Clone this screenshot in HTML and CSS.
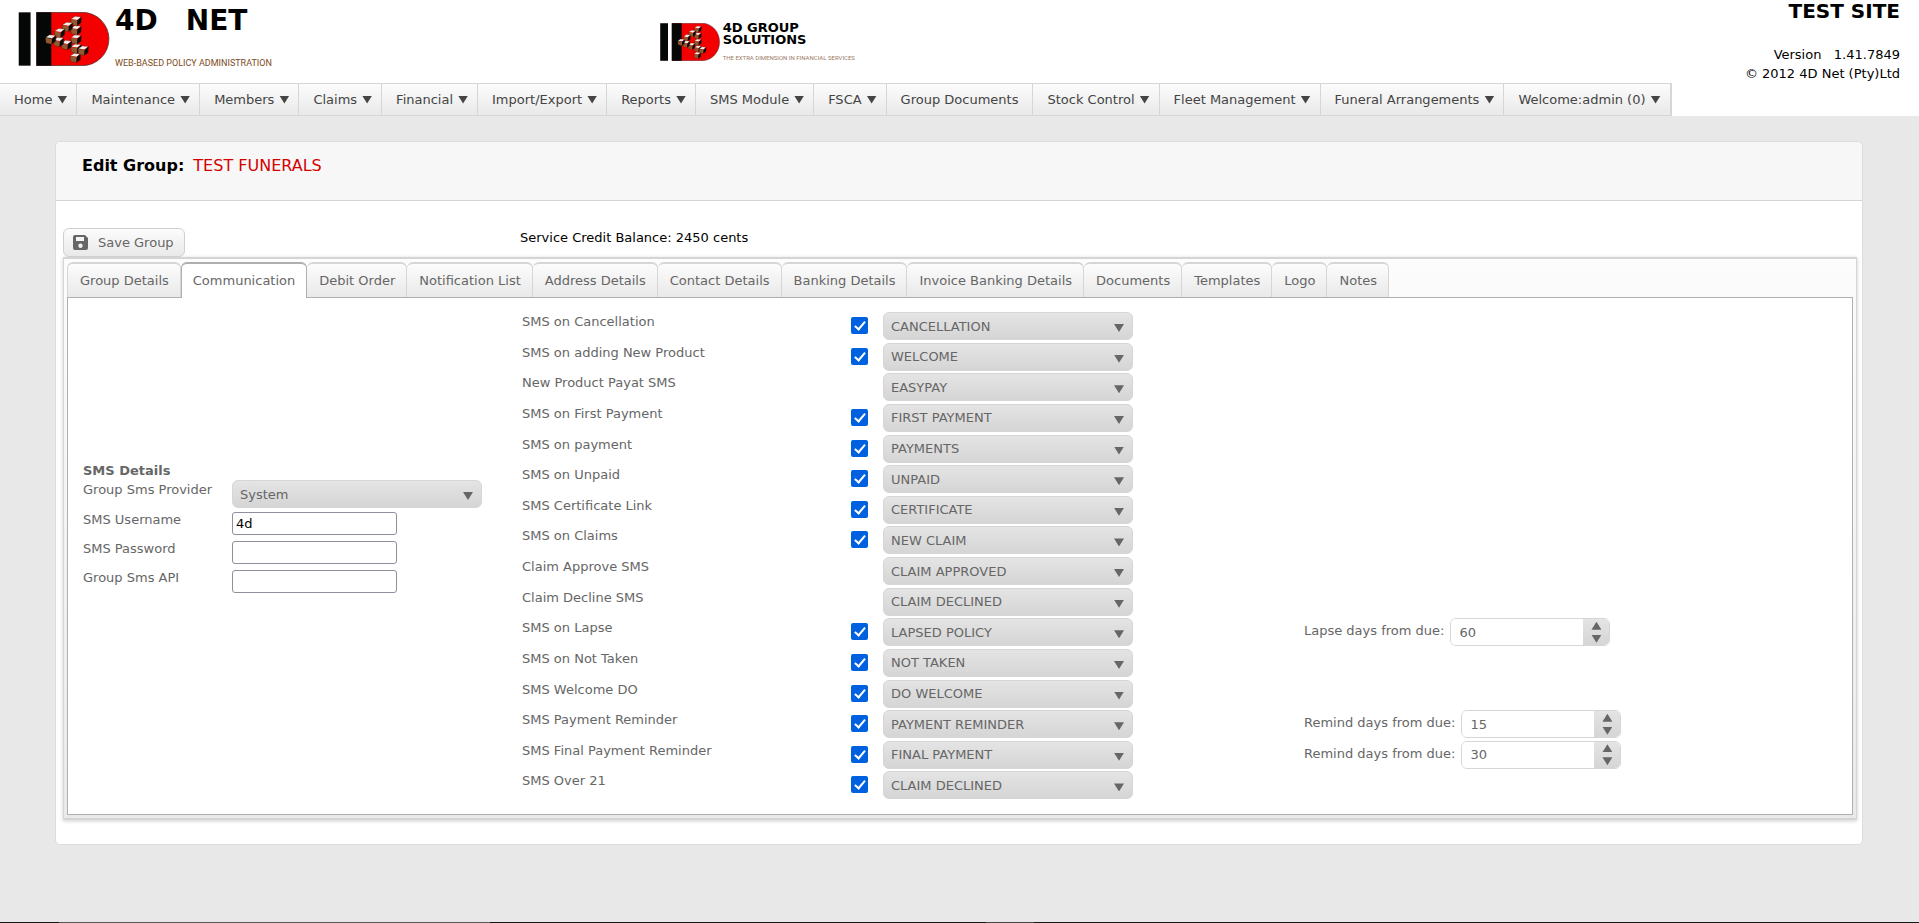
FILE: index.html
```html
<!DOCTYPE html>
<html lang="en">
<head>
<meta charset="utf-8">
<title>4D Net - Edit Group</title>
<link rel="stylesheet" href="styles.css">
</head>
<body>
<svg class="defs" aria-hidden="true">
  <defs>
    <g id="cube">
      <path d="M-15 -7 L-3 -15 L15 -13 L4 -4 Z" fill="#f1ede6"/>
      <path d="M-16 -6 L4 -3 L3 14 L-14 10 Z" fill="#8f5a30"/>
      <path d="M4 -3 L16 -13 L15 5 L3 14 Z" fill="#0a0a0a"/>
      <path d="M-16 -6 L-3 -15 L16 -13 L15 5 L3 14 L-14 10 Z" fill="none" stroke="#3a1208" stroke-width="1"/>
    </g>
    <g id="mark">
      <rect x="12" y="18" width="36" height="162" fill="#050706"/>
      <path d="M66 18 H205 A81 81 0 0 1 205 180 H66 Z" fill="#f40000" stroke="#333" stroke-width="2"/>
      <rect x="66" y="18" width="45" height="162" fill="#050706"/>
      <use href="#cube" x="184" y="157"/>
      <use href="#cube" x="186" y="129"/>
      <use href="#cube" x="208" y="135"/>
      <use href="#cube" x="186" y="101"/>
      <use href="#cube" x="186" y="73"/>
      <use href="#cube" x="186" y="45"/>
      <use href="#cube" x="160" y="63"/>
      <use href="#cube" x="136" y="82"/>
      <use href="#cube" x="157" y="118"/>
      <use href="#cube" x="133" y="109"/>
      <use href="#cube" x="109" y="101"/>
    </g>
  </defs>
</svg>

<header class="top">
  <div class="brand">
    <svg class="brand-mark" viewBox="11 17 277 164" aria-hidden="true"><use href="#mark"/></svg>
    <div class="brand-text">
      <div class="brand-name"><span>4D</span><span>NET</span></div>
      <div class="brand-tag">WEB-BASED POLICY ADMINISTRATION</div>
    </div>
  </div>
  <div class="partner">
    <svg class="partner-mark" viewBox="11 17 277 164" preserveAspectRatio="none" aria-hidden="true"><use href="#mark"/></svg>
    <div class="partner-text">
      <div class="partner-name">4D GROUP</div>
      <div class="partner-name">SOLUTIONS</div>
      <div class="partner-tag">THE EXTRA DIMENSION IN FINANCIAL SERVICES</div>
    </div>
  </div>
  <div class="site">
    <div class="site-name">TEST SITE</div>
    <div>Version &nbsp; 1.41.7849</div>
    <div>© 2012 4D Net (Pty)Ltd</div>
  </div>
</header>

<nav class="menu">
  <ul class="menu-list">
    <li><a class="drop" href="#">Home</a></li>
    <li><a class="drop" href="#">Maintenance</a></li>
    <li><a class="drop" href="#">Members</a></li>
    <li><a class="drop" href="#">Claims</a></li>
    <li><a class="drop" href="#">Financial</a></li>
    <li><a class="drop" href="#">Import/Export</a></li>
    <li><a class="drop" href="#">Reports</a></li>
    <li><a class="drop" href="#">SMS Module</a></li>
    <li><a class="drop" href="#">FSCA</a></li>
    <li><a href="#">Group Documents</a></li>
    <li><a class="drop" href="#">Stock Control</a></li>
    <li><a class="drop" href="#">Fleet Management</a></li>
    <li><a class="drop" href="#">Funeral Arrangements</a></li>
    <li><a class="drop" href="#">Welcome:admin (0)</a></li>
  </ul>
</nav>

<main class="card">
  <div class="card-head">
    <h1>Edit Group:</h1>
    <span class="group-name">TEST FUNERALS</span>
  </div>
  <div class="toolbar">
    <button class="save" type="button">
      <svg viewBox="0 0 15 15" aria-hidden="true"><path fill="#666" fill-rule="evenodd" d="M2 0H12L15 3V13A2 2 0 0 1 13 15H2A2 2 0 0 1 0 13V2A2 2 0 0 1 2 0ZM3 2V6H11V2ZM7.500 8.500A2.200 2.200 0 1 0 7.500 12.900A2.200 2.200 0 1 0 7.500 8.500Z"/></svg>
      Save Group
    </button>
    <p class="credit">Service Credit Balance: 2450 cents</p>
  </div>

  <div class="tabs">
    <div class="tab-list" role="tablist">
      <button class="tab" role="tab" type="button">Group Details</button>
      <button class="tab active" role="tab" type="button" aria-selected="true">Communication</button>
      <button class="tab" role="tab" type="button">Debit Order</button>
      <button class="tab" role="tab" type="button">Notification List</button>
      <button class="tab" role="tab" type="button">Address Details</button>
      <button class="tab" role="tab" type="button">Contact Details</button>
      <button class="tab" role="tab" type="button">Banking Details</button>
      <button class="tab" role="tab" type="button">Invoice Banking Details</button>
      <button class="tab" role="tab" type="button">Documents</button>
      <button class="tab" role="tab" type="button">Templates</button>
      <button class="tab" role="tab" type="button">Logo</button>
      <button class="tab" role="tab" type="button">Notes</button>
    </div>

    <div class="panel" role="tabpanel">
      <section class="account">
        <h2>SMS Details</h2>
        <div class="field"><label for="provider">Group Sms Provider</label><span class="pick"><select id="provider"><option>System</option></select></span></div>
        <div class="field"><label for="user">SMS Username</label><input class="text" id="user" type="text" value="4d"></div>
        <div class="field"><label for="pass">SMS Password</label><input class="text" id="pass" type="password"></div>
        <div class="field"><label for="api">Group Sms API</label><input class="text" id="api" type="text"></div>
      </section>

      <section class="events">
        <div class="event"><label for="e1">SMS on Cancellation</label><input type="checkbox" id="e1" checked><span class="pick"><select aria-label="SMS on Cancellation template"><option>CANCELLATION</option></select></span></div>
        <div class="event"><label for="e2">SMS on adding New Product</label><input type="checkbox" id="e2" checked><span class="pick"><select aria-label="SMS on adding New Product template"><option>WELCOME</option></select></span></div>
        <div class="event"><label for="s3">New Product Payat SMS</label><span class="pick"><select id="s3"><option>EASYPAY</option></select></span></div>
        <div class="event"><label for="e4">SMS on First Payment</label><input type="checkbox" id="e4" checked><span class="pick"><select aria-label="SMS on First Payment template"><option>FIRST PAYMENT</option></select></span></div>
        <div class="event"><label for="e5">SMS on payment</label><input type="checkbox" id="e5" checked><span class="pick"><select aria-label="SMS on payment template"><option>PAYMENTS</option></select></span></div>
        <div class="event"><label for="e6">SMS on Unpaid</label><input type="checkbox" id="e6" checked><span class="pick"><select aria-label="SMS on Unpaid template"><option>UNPAID</option></select></span></div>
        <div class="event"><label for="e7">SMS Certificate Link</label><input type="checkbox" id="e7" checked><span class="pick"><select aria-label="SMS Certificate Link template"><option>CERTIFICATE</option></select></span></div>
        <div class="event"><label for="e8">SMS on Claims</label><input type="checkbox" id="e8" checked><span class="pick"><select aria-label="SMS on Claims template"><option>NEW CLAIM</option></select></span></div>
        <div class="event"><label for="s9">Claim Approve SMS</label><span class="pick"><select id="s9"><option>CLAIM APPROVED</option></select></span></div>
        <div class="event"><label for="s10">Claim Decline SMS</label><span class="pick"><select id="s10"><option>CLAIM DECLINED</option></select></span></div>
        <div class="event"><label for="e11">SMS on Lapse</label><input type="checkbox" id="e11" checked><span class="pick"><select aria-label="SMS on Lapse template"><option>LAPSED POLICY</option></select></span>
          <div class="days"><label for="d1">Lapse days from due:</label><span class="spin"><input id="d1" type="text" inputmode="numeric" value="60"><span class="steps"><button type="button" aria-label="Increase"></button><button class="down" type="button" aria-label="Decrease"></button></span></span></div></div>
        <div class="event"><label for="e12">SMS on Not Taken</label><input type="checkbox" id="e12" checked><span class="pick"><select aria-label="SMS on Not Taken template"><option>NOT TAKEN</option></select></span></div>
        <div class="event"><label for="e13">SMS Welcome DO</label><input type="checkbox" id="e13" checked><span class="pick"><select aria-label="SMS Welcome DO template"><option>DO WELCOME</option></select></span></div>
        <div class="event"><label for="e14">SMS Payment Reminder</label><input type="checkbox" id="e14" checked><span class="pick"><select aria-label="SMS Payment Reminder template"><option>PAYMENT REMINDER</option></select></span>
          <div class="days"><label for="d2">Remind days from due:</label><span class="spin"><input id="d2" type="text" inputmode="numeric" value="15"><span class="steps"><button type="button" aria-label="Increase"></button><button class="down" type="button" aria-label="Decrease"></button></span></span></div></div>
        <div class="event"><label for="e15">SMS Final Payment Reminder</label><input type="checkbox" id="e15" checked><span class="pick"><select aria-label="SMS Final Payment Reminder template"><option>FINAL PAYMENT</option></select></span>
          <div class="days"><label for="d3">Remind days from due:</label><span class="spin"><input id="d3" type="text" inputmode="numeric" value="30"><span class="steps"><button type="button" aria-label="Increase"></button><button class="down" type="button" aria-label="Decrease"></button></span></span></div></div>
        <div class="event"><label for="e16">SMS Over 21</label><input type="checkbox" id="e16" checked><span class="pick"><select aria-label="SMS Over 21 template"><option>CLAIM DECLINED</option></select></span></div>
      </section>
    </div>
  </div>
</main>
<footer class="strip"></footer>
</body>
</html>
```
FILE: styles.css
```css
*,
*::before,
*::after {
  box-sizing: border-box;
}

body {
  display: flex;
  flex-direction: column;
  min-height: 100vh;
  margin: 0;
  background: #e8e8e8;
  color: #000;
  font-family: Verdana, "DejaVu Sans", sans-serif;
  font-size: 13px;
  line-height: 19px;
}

button,
input,
select {
  margin: 0;
  font: inherit;
}

.defs {
  position: absolute;
  width: 0;
  height: 0;
}

/* Header */

.top {
  display: grid;
  grid-template-columns: 11fr 12fr 9fr;
  height: 83px;
  background: #fff;
}

.brand {
  display: flex;
  gap: 5px;
  padding: 12px 0 0 18px;
}

.brand-mark {
  width: 92px;
  height: 54px;
}

.brand-text {
  display: flex;
  flex-direction: column;
  justify-content: space-between;
  height: 58px;
}

.brand-name {
  display: flex;
  gap: 28px;
  font-size: 28px;
  font-weight: bold;
  line-height: 18px;
}

.brand-tag {
  color: #7d4a22;
  font-family: Roboto, sans-serif;
  font-size: 9px;
  line-height: 14px;
}

.partner {
  display: flex;
  gap: 3px;
  padding-top: 22px;
}

.partner-mark {
  width: 60px;
  height: 38px;
  margin-top: 1px;
}

.partner-name {
  font-size: 13px;
  font-weight: bold;
  line-height: 12px;
}

.partner-tag {
  margin-top: 6px;
  color: #9a7a66;
  font-family: Roboto, sans-serif;
  font-size: 6px;
  line-height: 12px;
}

.site {
  padding-right: 19px;
  text-align: right;
}

.site-name {
  margin-bottom: 23px;
  font-size: 20px;
  font-weight: bold;
  line-height: 22px;
}

/* Menu */

.menu {
  display: flex;
  background: #fff;
}

.menu-list {
  display: flex;
  margin: 0;
  padding: 0;
  border: 1px solid #d6d6d6;
  border-width: 1px 2px 1px 0;
  list-style: none;
}

.menu-list li + li {
  border-left: 1px solid #d6d6d6;
}

.menu-list a {
  display: flex;
  align-items: center;
  height: 31px;
  padding: 0 14px;
  background: linear-gradient(#fcfcfc, #e9e9e9);
  color: #444;
  text-decoration: none;
}

.menu-list .drop {
  gap: 5px;
  padding-right: 9px;
}

.drop::after {
  width: 10px;
  height: 8px;
  background: #444;
  clip-path: polygon(0 0, 100% 0, 50% 100%);
  content: "";
}

/* Card */

.card {
  margin: 25px 56px 0 55px;
  border: 1px solid #dcdcdc;
  border-radius: 5px;
  background: #fff;
  padding-bottom: 24px;
}

.card-head {
  display: flex;
  gap: 9px;
  height: 59px;
  padding: 14px 26px;
  border-bottom: 1px solid #d5d5d5;
  border-radius: 5px 5px 0 0;
  background: #f7f7f7;
  font-size: 16px;
}

.card-head h1 {
  margin: 0;
  font-size: 16px;
}

.group-name {
  color: #d40000;
}

.toolbar {
  display: grid;
  grid-template-columns: 457px 1fr;
  align-items: start;
  padding: 27px 7px 0;
}

.save {
  display: flex;
  align-items: center;
  justify-self: start;
  gap: 10px;
  height: 29px;
  padding: 0 10px 0 9px;
  border: 1px solid #d0d0d0;
  border-radius: 6px;
  background: linear-gradient(#fcfcfc, #e9e9e9);
  color: #666;
}

.save svg {
  width: 15px;
  height: 15px;
}

.credit {
  margin: 0;
}

/* Tabs */

.tabs {
  margin: 0 5px 0 7px;
  padding: 3px;
  border: 1px solid #d5d5d5;
  border-width: 2px 1px;
  background: linear-gradient(#fcfcfc, #e9e9e9);
  box-shadow: 0 1px 4px rgba(0, 0, 0, 0.2);
}

.tab-list {
  display: flex;
}

.tab {
  height: 35px;
  padding: 0 11px 0 12px;
  border: 1px solid #d6d6d6;
  border-width: 2px 1px 0 0;
  border-radius: 6px 6px 0 0;
  background: linear-gradient(#fcfcfc, #e9e9e9);
  color: #666;
}

.tab:first-child {
  border-left-width: 1px;
}

.tab.active {
  z-index: 1;
  height: 36px;
  margin-bottom: -1px;
  padding: 0 11px 1px;
  border-color: #b0b0b0;
  border-left-width: 1px;
  background: #fff;
}

.panel {
  display: grid;
  grid-template-columns: 439px 1fr;
  padding: 14px 15px 12px;
  border: 1px solid #b0b0b0;
  background: #fff;
  color: #666;
}

.account {
  align-self: center;
  padding-bottom: 56px;
}

.account h2 {
  margin: 0;
  font-size: 13px;
  line-height: 19px;
}

.field {
  display: grid;
  grid-template-columns: 149px 1fr;
  align-items: start;
  margin-bottom: 4px;
}

.field .pick {
  margin-bottom: -2px;
}

.field .text {
  width: 165px;
  height: 23px;
  margin-top: 2px;
  padding: 0 3px;
  border: 1px solid #8f8f9d;
  border-radius: 3px;
  background: #fff;
  color: #000;
}

.events {
  display: grid;
  grid-auto-rows: 1fr;
  min-height: 490px;
}

.event {
  display: grid;
  grid-template-columns: 329px 32px 250px 1fr;
  align-items: start;
}

.event > input {
  grid-column: 2;
}

.event > .pick {
  grid-column: 3;
  grid-row: 1;
}

input[type="checkbox"] {
  position: relative;
  width: 17px;
  height: 17px;
  margin-top: 5px;
  border-radius: 2px;
  appearance: none;
}

input[type="checkbox"]:checked {
  background: #0061e0;
}

input[type="checkbox"]:checked::after {
  position: absolute;
  top: 2px;
  left: 6px;
  width: 6px;
  height: 11px;
  border: solid #fff;
  border-width: 0 2px 2px 0;
  content: "";
  transform: rotate(40deg);
}

.pick {
  position: relative;
  display: block;
  width: 250px;
}

.pick::after {
  position: absolute;
  top: 12px;
  right: 9px;
  width: 10px;
  height: 8px;
  background: #666;
  clip-path: polygon(0 0, 100% 0, 50% 100%);
  content: "";
  pointer-events: none;
}

.pick select {
  display: block;
  width: 100%;
  height: 28px;
  padding: 0 7px;
  border: 1px solid #d6d6d6;
  border-radius: 6px;
  appearance: none;
  background: linear-gradient(#e4e4e4, #d5d5d5);
  color: #666;
}

.days {
  display: flex;
  grid-column: 4;
  grid-row: 1;
  gap: 6px;
  padding-left: 171px;
}

.days label {
  padding-top: 3px;
}

.spin {
  display: flex;
  width: 160px;
  height: 28px;
  overflow: hidden;
  border: 1px solid #d6d6d6;
  border-radius: 6px;
}

.spin input {
  flex: 1;
  min-width: 0;
  padding: 0 8px;
  border: 0;
  background: #fff;
  color: #666;
}

.steps {
  display: flex;
  flex-direction: column;
  width: 26px;
  background: linear-gradient(#e4e4e4, #d5d5d5);
}

.steps button {
  display: flex;
  flex: 1;
  align-items: center;
  justify-content: center;
  padding: 0;
  border: 0;
  background: none;
}

.steps button::after {
  width: 10px;
  height: 8px;
  background: #666;
  clip-path: polygon(50% 0, 100% 100%, 0 100%);
  content: "";
}

.steps .down::after {
  clip-path: polygon(0 0, 100% 0, 50% 100%);
}

/* Bottom edge */

.strip {
  height: 1px;
  margin-top: auto;
  background: linear-gradient(90deg, #1a1618 59px, #5a5557 59px 490px, #1a1618 490px 986px, #484446 986px 1034px, #1a1618 1034px);
}
```
